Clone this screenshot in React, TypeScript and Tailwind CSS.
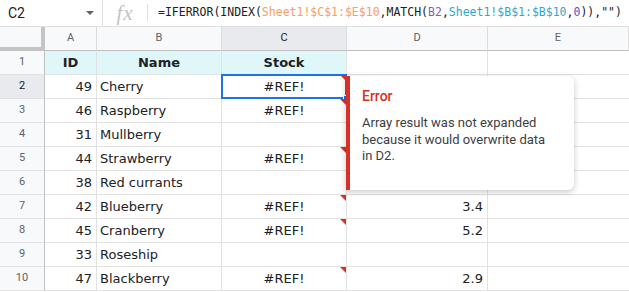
import React from "react";

const rows = [
  { id: "49", name: "Cherry", stock: "#REF!", d: "", err: true },
  { id: "46", name: "Raspberry", stock: "#REF!", d: "", err: true },
  { id: "31", name: "Mullberry", stock: "", d: "", err: false },
  { id: "44", name: "Strawberry", stock: "#REF!", d: "", err: true },
  { id: "38", name: "Red currants", stock: "", d: "", err: false },
  { id: "42", name: "Blueberry", stock: "#REF!", d: "3.4", err: true },
  { id: "45", name: "Cranberry", stock: "#REF!", d: "5.2", err: true },
  { id: "33", name: "Roseship", stock: "", d: "", err: false },
  { id: "47", name: "Blackberry", stock: "#REF!", d: "2.9", err: true },
];

const cols = "grid grid-cols-[45px_52px_125px_125px_141px_141px]";

function ErrorMark() {
  return (
    <div className="absolute top-0 right-0 w-[6px] h-[6px] bg-[#d93025] [clip-path:polygon(0_0,100%_0,100%_100%)]" />
  );
}

export default function App() {
  return (
    <div className="w-[629px] h-[292px] overflow-hidden bg-white relative font-['DejaVu_Sans',sans-serif] text-[13px] text-[#202124]">
      {/* formula bar */}
      <div className="h-[27px] flex items-stretch border-b border-[#e0e0e0]">
        <div className="w-[103px] flex items-center justify-between pl-2 pr-[8px] border-r border-[#e0e0e0] font-['Roboto',sans-serif] text-[14px] text-[#202124]">
          <span>C2</span>
          <span className="w-0 h-0 border-l-[4px] border-r-[4px] border-t-[4px] border-l-transparent border-r-transparent border-t-[#5f6368]" />
        </div>
        <div className="w-[44px] flex items-center justify-center">
          <span className="font-['Liberation_Serif',serif] italic text-[21px] text-[#c4c4c4] leading-none tracking-[1px]">fx</span>
        </div>
        <div className="w-px my-[4px] bg-[#e0e0e0]" />
        <div className="flex items-center pl-[10px] font-['DejaVu_Sans_Mono',monospace] text-[11.5px] whitespace-nowrap text-[#202124]">
          <span>=IFERROR(INDEX(</span>
          <span className="text-[#f4a060]">Sheet1!$C$1:$E$10</span>
          <span>,MATCH(</span>
          <span className="text-[#8e5cb0]">B2</span>
          <span>,</span>
          <span className="text-[#2fa8c8]">Sheet1!$B$1:$B$10</span>
          <span>,</span>
          <span className="text-[#4b57c4]">0</span>
          <span>)),""</span>
          <span>)</span>
        </div>
      </div>

      {/* column headers */}
      <div className={`${cols} h-[24px] font-['Roboto',sans-serif] text-[11px] text-[#5f6368]`}>
        <div className="bg-[#f8f9fa] border-r-4 border-b-4 border-[#c4c4c4]" />
        {["A", "B", "C", "D", "E"].map((c) => (
          <div
            key={c}
            className={`flex items-center justify-center border-r border-b border-b-[#c0c0c0] border-r-[#dcdcdc] ${
              c === "C" ? "bg-[#e8eaed] text-[#202124]" : "bg-[#f8f9fa]"
            }`}
          >
            {c}
          </div>
        ))}
      </div>

      {/* row 1 */}
      <div className={`${cols} h-[24px]`}>
        <div className="flex items-center justify-center bg-[#f8f9fa] border-r border-b border-r-[#c0c0c0] border-b-[#e2e2e2] font-['Roboto',sans-serif] text-[11px] text-[#5f6368]">
          1
        </div>
        <div className="flex items-center justify-center bg-[#e0f7fa] border-r border-b border-[#e2e2e2] font-bold">ID</div>
        <div className="flex items-center justify-center bg-[#e0f7fa] border-r border-b border-[#e2e2e2] font-bold">Name</div>
        <div className="flex items-center justify-center bg-[#e0f7fa] border-r border-b border-[#e2e2e2] font-bold">Stock</div>
        <div className="border-r border-b border-[#e2e2e2]" />
        <div className="border-b border-[#e2e2e2]" />
      </div>

      {rows.map((r, i) => {
        const n = i + 2;
        const selected = n === 2;
        return (
          <div key={n} className={`${cols} h-[24px]`}>
            <div
              className={`flex items-center justify-center border-r border-b border-r-[#c0c0c0] border-b-[#e2e2e2] font-['Roboto',sans-serif] text-[11px] ${
                selected ? "bg-[#e8eaed] text-[#202124]" : "bg-[#f8f9fa] text-[#5f6368]"
              }`}
            >
              {n}
            </div>
            <div className="flex items-center justify-end pr-[4px] border-r border-b border-[#e2e2e2]">{r.id}</div>
            <div className="flex items-center pl-[3px] border-r border-b border-[#e2e2e2]">{r.name}</div>
            <div className="relative flex items-center justify-center border-r border-b border-[#e2e2e2]">
              {r.stock}
              {r.err && <ErrorMark />}
              {selected && (
                <>
                  <div className="absolute -top-px -left-px -right-px -bottom-px border-2 border-[#1a73e8]" />
                  <div className="absolute -right-[3px] -bottom-[3px] w-[6px] h-[6px] bg-[#1a73e8] border border-white" />
                </>
              )}
            </div>
            <div className="flex items-center justify-end pr-[4px] border-r border-b border-[#e2e2e2]">{r.d}</div>
            <div className="border-b border-[#e2e2e2]" />
          </div>
        );
      })}

      {/* error tooltip */}
      <div className="absolute left-[346px] top-[76px] w-[228px] h-[114px] bg-white border-l-4 border-[#d93025] rounded-r-[6px] shadow-[0_2px_6px_rgba(0,0,0,0.22)] pl-[12px] pt-[11px] font-['Roboto',sans-serif]">
        <div className="text-[14px] font-medium text-[#d93025] leading-[18px]">Error</div>
        <div className="mt-[10px] w-[190px] text-[13px] leading-[16.5px] text-[#3c4043]">
          Array result was not expanded because it would overwrite data in D2.
        </div>
      </div>
    </div>
  );
}
